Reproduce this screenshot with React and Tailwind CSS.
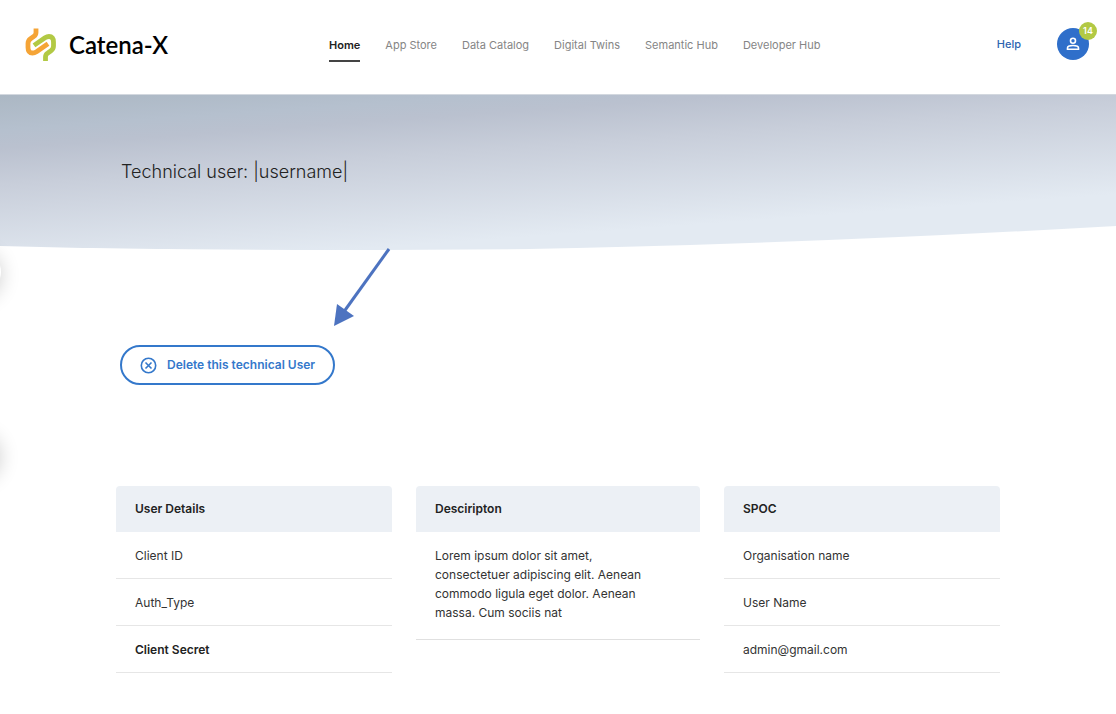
const navItems = ["Home", "App Store", "Data Catalog", "Digital Twins", "Semantic Hub", "Developer Hub"];

function Logo() {
  return (
    <a href="#home" className="flex items-center gap-3 text-black">
      <svg width="32" height="34" viewBox="0 0 32 34" fill="none" strokeWidth="4.8" strokeLinejoin="round" aria-hidden="true">
        <path d="M11 0.500V4.500Q11 7 9 8.300L5.500 10.800Q3 12.600 3 15.500V19.500Q3 25 7.500 25Q9.500 25 11.500 23.700L23 15.800" stroke="#f5a436" />
        <path d="M20.500 33V29Q20.500 26.500 22.500 25.200L26 22.700Q28.500 20.900 28.500 18V14Q28.500 8.500 24 8.500Q22 8.500 20 9.800L9 17.400" stroke="#b2c944" />
      </svg>
      <span className="font-[Lato,sans-serif] text-2xl font-semibold">Catena-X</span>
    </a>
  );
}

function Header() {
  return (
    <header className="grid h-[94px] grid-cols-[304px_1fr_auto] items-center bg-white pr-[27px] pb-1 pl-[25px]">
      <Logo />
      <nav aria-label="Main" className="flex gap-[25px] text-[11px] text-[#858585]">
        {navItems.map((item, i) => (
          <a
            key={item}
            href="#nav"
            aria-current={i === 0 ? "page" : undefined}
            className={i === 0 ? "border-b-2 border-[#444] pt-[9px] pb-[7px] font-semibold text-[#222]" : "border-b-2 border-transparent pt-[9px] pb-[7px]"}
          >
            {item}
          </a>
        ))}
      </nav>
      <div className="flex items-center gap-9 pb-0.5">
        <a href="#help" className="text-[11px] font-medium text-[#2d64b0]">Help</a>
        <button type="button" aria-label="Account" className="relative flex size-8 items-center justify-center rounded-full bg-[#2f6fca] text-white">
          <svg width="16" height="16" viewBox="0 0 16 16" fill="none" stroke="currentColor" strokeWidth="1.600" aria-hidden="true">
            <circle cx="8" cy="4.800" r="2.500" />
            <path d="M2.500 13.200V12C2.500 10.400 5.500 9.500 8 9.500S13.500 10.400 13.500 12V13.200Z" />
          </svg>
          <span className="absolute -top-1.5 -right-2 flex size-[18px] items-center justify-center rounded-full bg-[#b2c944] text-[9px] font-semibold">14</span>
        </button>
      </div>
    </header>
  );
}

function Hero() {
  return (
    <section className="relative h-[156px] px-[121px] pt-16">
      <svg className="absolute inset-0 size-full" viewBox="0 0 1116 156" preserveAspectRatio="none" aria-hidden="true">
        <defs>
          <linearGradient id="hero" gradientUnits="userSpaceOnUse" x1="0" y1="0" x2="13" y2="180">
            <stop offset="0" stopColor="#abb7c3" />
            <stop offset="0.200" stopColor="#b5c0ce" />
            <stop offset="0.300" stopColor="#bac1cf" />
            <stop offset="0.500" stopColor="#c8ceda" />
            <stop offset="1" stopColor="#e3eaf2" />
          </linearGradient>
        </defs>
        <path d="M0 0H1116V132Q800 150 530 155Q240 158 0 152Z" fill="url(#hero)" />
        <path d="M0 0.500H1116" stroke="#d3d8df" />
      </svg>
      <h1 className="relative text-lg leading-7 font-light text-[#222]">Technical user: |username|</h1>
    </section>
  );
}

function DetailTable({ title, children }) {
  return (
    <table className="w-full self-start text-left text-xs text-[#333]">
      <thead>
        <tr>
          <th scope="col" className="h-[46px] rounded-t bg-[#ecf0f5] px-[19px] font-semibold text-[#222]">{title}</th>
        </tr>
      </thead>
      <tbody>{children}</tbody>
    </table>
  );
}

function DetailRow({ strong, children }) {
  return (
    <tr className="border-b border-[#e6e6e6]">
      <td className={strong ? "px-[19px] pt-[15px] pb-[13px] leading-[18px] font-semibold text-[#222]" : "px-[19px] pt-[15px] pb-[13px] leading-[18px]"}>{children}</td>
    </tr>
  );
}

export default function App() {
  return (
    <div className="relative min-h-screen overflow-hidden bg-white font-[Inter,sans-serif]">
      <Header />
      <Hero />
      <div aria-hidden="true" className="absolute top-[248px] -left-[47px] size-12 rounded-full bg-white shadow-[0_3px_20px_rgba(0,0,0,0.2)]" />
      <div aria-hidden="true" className="absolute top-[430px] -left-[48px] size-12 rounded-full bg-white shadow-[0_3px_20px_rgba(0,0,0,0.2)]" />
      <main className="px-[116px] pb-10">
        <div className="relative pt-[95px] pl-1">
          <svg className="absolute top-[-2px] left-[216px]" width="60" height="80" viewBox="0 0 60 80" aria-hidden="true">
            <path d="M57 1L11 65" stroke="#4d73c0" strokeWidth="3" />
            <path d="M2 78L5 56L22 68Z" fill="#4d73c0" />
          </svg>
          <button type="button" className="flex h-10 items-center gap-[10px] rounded-full border-2 border-[#3478cb] px-[18px] text-xs font-semibold text-[#3478cb]">
            <svg width="17" height="17" viewBox="0 0 17 17" fill="none" stroke="currentColor" strokeWidth="1.600" aria-hidden="true">
              <circle cx="8.500" cy="8.500" r="7.200" />
              <path d="M5.500 5.500L11.500 11.500M11.500 5.500L5.500 11.500" />
            </svg>
            Delete this technical User
          </button>
        </div>
        <div className="mt-[101px] grid grid-cols-[276fr_284fr_276fr] gap-6">
          <DetailTable title="User Details">
            <DetailRow>Client ID</DetailRow>
            <DetailRow>Auth_Type</DetailRow>
            <DetailRow strong>Client Secret</DetailRow>
          </DetailTable>
          <DetailTable title="Desciripton">
            <tr className="border-b border-[#e0e0e0]">
              <td className="px-[19px] pt-[14px] pb-[17px] leading-[19px]">
                Lorem ipsum dolor sit amet,<br />
                consectetuer adipiscing elit. Aenean<br />
                commodo ligula eget dolor. Aenean<br />
                massa. Cum sociis nat
              </td>
            </tr>
          </DetailTable>
          <DetailTable title="SPOC">
            <DetailRow>Organisation name</DetailRow>
            <DetailRow>User Name</DetailRow>
            <DetailRow>admin@gmail.com</DetailRow>
          </DetailTable>
        </div>
      </main>
    </div>
  );
}
